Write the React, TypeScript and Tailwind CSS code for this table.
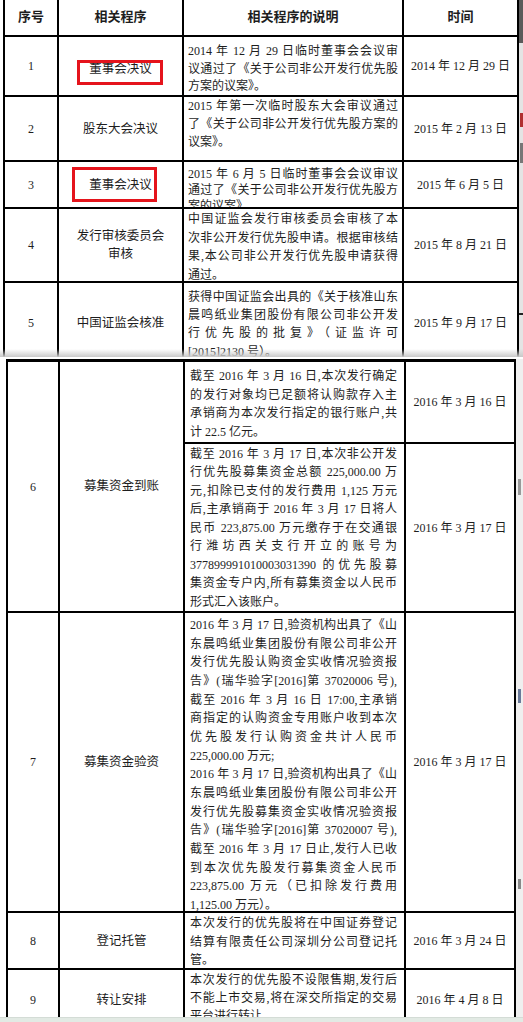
import React from 'react';

type Row = {
  no: string;
  prog: React.ReactNode;
  desc: string[][];
  date: string;
  h: string;
  pt: string;
  lh: string;
  box?: string;
  progPad?: string;
  clip?: boolean;
};

type Cols = { c1: string; c2: string; c3: string; c4: string; pad: string };

const FONT = { fontFamily: '"Liberation Serif", "Noto Sans CJK SC", serif' };

const topCols: Cols = { c1: 'w-[54px]', c2: 'w-[125px]', c3: 'w-[220px]', c4: 'w-[113px]', pad: 'pl-[4px] pr-[4px]' };
const bottomCols: Cols = { c1: 'w-[52px]', c2: 'w-[125px]', c3: 'w-[221px]', c4: 'w-[108px]', pad: 'pl-[5px] pr-[7px]' };

const topRows: Row[] = [
  {
    no: '1',
    prog: '董事会决议',
    progPad: 'pt-[6px]',
    box: 'left-[18px] top-[23px] w-[86px] h-[25px]',
    desc: [['2014 年 12 月 29 日临时董事会会议审', '议通过了《关于公司非公开发行优先股', '方案的议案》。']],
    date: '2014 年 12 月 29 日',
    h: 'h-[60px]',
    pt: 'pt-[6px]',
    lh: 'leading-[17.7px]',
  },
  {
    no: '2',
    prog: '股东大会决议',
    desc: [['2015 年第一次临时股东大会审议通过', '了《关于公司非公开发行优先股方案的', '议案》。']],
    date: '2015 年 2 月 13 日',
    h: 'h-[65px]',
    pt: 'pt-[0px]',
    lh: 'leading-[18px]',
  },
  {
    no: '3',
    prog: '董事会决议',
    box: 'left-[13px] top-[5px] w-[85px] h-[35px]',
    desc: [['2015 年 6 月 5 日临时董事会会议审议', '通过了《关于公司非公开发行优先股方', '案的议案》。']],
    date: '2015 年 6 月 5 日',
    h: 'h-[47px]',
    pt: 'pt-[4px]',
    lh: 'leading-[16px]',
    clip: true,
  },
  {
    no: '4',
    prog: (
      <>
        发行审核委员会
        <br />
        审核
      </>
    ),
    desc: [['中国证监会发行审核委员会审核了本', '次非公开发行优先股申请。根据审核结', '果,本公司非公开发行优先股申请获得', '通过。']],
    date: '2015 年 8 月 21 日',
    h: 'h-[74px]',
    pt: 'pt-[1px]',
    lh: 'leading-[18.7px]',
  },
  {
    no: '5',
    prog: '中国证监会核准',
    desc: [['获得中国证监会出具的《关于核准山东', '晨鸣纸业集团股份有限公司非公开发', '行优先股的批复》（证监许可', '[2015]2130 号）。']],
    date: '2015 年 9 月 17 日',
    h: 'h-[82px]',
    pt: 'pt-[5px]',
    lh: 'leading-[18.2px]',
  },
];

const bottomRows: Row[] = [
  {
    no: '7',
    prog: '募集资金验资',
    desc: [
      [
        '2016 年 3 月 17 日,验资机构出具了《山',
        '东晨鸣纸业集团股份有限公司非公开',
        '发行优先股认购资金实收情况验资报',
        '告》(瑞华验字[2016]第 37020006 号),',
        '截至 2016 年 3 月 16 日 17:00,主承销',
        '商指定的认购资金专用账户收到本次',
        '优先股发行认购资金共计人民币',
        '225,000.00 万元;',
      ],
      [
        '2016 年 3 月 17 日,验资机构出具了《山',
        '东晨鸣纸业集团股份有限公司非公开',
        '发行优先股募集资金实收情况验资报',
        '告》(瑞华验字[2016]第 37020007 号),',
        '截至 2016 年 3 月 17 日止,发行人已收',
        '到本次优先股发行募集资金人民币',
        '223,875.00 万元（已扣除发行费用',
        '1,125.00 万元）。',
      ],
    ],
    date: '2016 年 3 月 17 日',
    h: 'h-[300px]',
    pt: 'pt-[3px]',
    lh: 'leading-[18.67px]',
  },
  {
    no: '8',
    prog: '登记托管',
    desc: [['本次发行的优先股将在中国证券登记', '结算有限责任公司深圳分公司登记托', '管。']],
    date: '2016 年 3 月 24 日',
    h: 'h-[57px]',
    pt: 'pt-[1px]',
    lh: 'leading-[18.5px]',
  },
  {
    no: '9',
    prog: '转让安排',
    desc: [['本次发行的优先股不设限售期,发行后', '不能上市交易,将在深交所指定的交易', '平台进行转让。']],
    date: '2016 年 4 月 8 日',
    h: 'h-[62px]',
    pt: 'pt-[1px]',
    lh: 'leading-[18px]',
  },
];

function Desc({ desc, lh, pt, pad }: { desc: string[][]; lh: string; pt: string; pad: string }) {
  return (
    <div className={`${pt} ${pad} ${lh} text-[12px]`}>
      {desc.map((para, i) => (
        <div key={i}>
          {para.map((line, j) => (
            <div key={j} className={j < para.length - 1 ? 'text-justify [text-align-last:justify]' : 'text-left'}>
              {line}
            </div>
          ))}
        </div>
      ))}
    </div>
  );
}

function TableRow({ row, cols }: { row: Row; cols: Cols }) {
  return (
    <div className={`flex ${row.h} border-b-2 border-black`}>
      <div className={`${cols.c1} shrink-0 border-r-2 border-black flex items-center justify-center text-[12px]`}>{row.no}</div>
      <div
        className={`${cols.c2} ${row.progPad ?? ''} relative shrink-0 border-r-2 border-black flex items-center justify-center text-center text-[12.5px] leading-[18px]`}
      >
        <span>{row.prog}</span>
        {row.box && <div className={`absolute ${row.box} border-[3px] border-[#e5141c]`} />}
      </div>
      <div className={`${cols.c3} shrink-0 border-r-2 border-black ${row.clip ? 'overflow-hidden' : ''}`}>
        <Desc desc={row.desc} lh={row.lh} pt={row.pt} pad={cols.pad} />
      </div>
      <div className={`${cols.c4} shrink-0 flex items-center justify-center text-[12px]`}>{row.date}</div>
    </div>
  );
}

export default function App() {
  const row6a = [['截至 2016 年 3 月 16 日,本次发行确定', '的发行对象均已足额将认购款存入主', '承销商为本次发行指定的银行账户,共', '计 22.5 亿元。']];
  const row6b = [
    [
      '截至 2016 年 3 月 17 日,本次非公开发',
      '行优先股募集资金总额 225,000.00 万',
      '元,扣除已支付的发行费用 1,125 万元',
      '后,主承销商于 2016 年 3 月 17 日将人',
      '民币 223,875.00 万元缴存于在交通银',
      '行潍坊西关支行开立的账号为',
      '377899991010003031390 的优先股募',
      '集资金专户内,所有募集资金以人民币',
      '形式汇入该账户。',
    ],
  ];

  return (
    <div className="relative w-[523px] h-[1022px] overflow-hidden bg-white text-[#1e1e1e]" style={FONT}>
      {/* first page capture */}
      <div className="relative flex h-[357px] overflow-hidden">
        <div className="ml-[3px] w-[514px] shrink-0 border-l-2 border-black">
          <div className="flex h-[37px] border-b-2 border-black font-bold text-[13px]" style={{ fontFamily: '"Noto Sans CJK SC", sans-serif' }}>
            <div className={`${topCols.c1} shrink-0 border-r-2 border-black flex items-center justify-center pb-[4px]`}>序号</div>
            <div className={`${topCols.c2} shrink-0 border-r-2 border-black flex items-center justify-center pb-[4px]`}>相关程序</div>
            <div className={`${topCols.c3} shrink-0 border-r-2 border-black flex items-center justify-center pb-[4px]`}>相关程序的说明</div>
            <div className={`${topCols.c4} shrink-0 flex items-center justify-center pb-[4px]`}>时间</div>
          </div>
          {topRows.map((r) => (
            <TableRow key={r.no} row={r} cols={topCols} />
          ))}
        </div>
        <div className="flex-1 border-l-2 border-black flex flex-col">
          <div className="h-[43px] bg-[#5a5a5a]" />
          <div className="flex-1 bg-[#e4e4e4] relative">
            <div className="absolute left-[1px] top-[70px] w-[3px] h-[14px] bg-[#b03030]" />
            <div className="absolute left-[1px] top-[100px] w-[3px] h-[20px] bg-[#777]" />
            <div className="absolute left-[0px] top-[270px] w-[4px] h-[2px] bg-[#222]" />
          </div>
        </div>
        <div className="absolute bottom-0 left-0 right-0 h-[8px] bg-linear-to-b from-[#f4f4f4]/0 to-[#c9c9c9]" />
      </div>

      <div className="h-[2px]" />

      {/* second page capture */}
      <div className="flex">
        <div className="ml-[6px] w-[508px] shrink-0 border-l-2 border-t-[3px] border-black">
          <div className="flex h-[251px] border-b-2 border-black">
            <div className={`${bottomCols.c1} shrink-0 border-r-2 border-black flex items-center justify-center text-[12px]`}>6</div>
            <div className={`${bottomCols.c2} shrink-0 border-r-2 border-black flex items-center justify-center text-[12.5px]`}>募集资金到账</div>
            <div className="flex flex-col">
              <div className="flex h-[82px] border-b-2 border-black">
                <div className={`${bottomCols.c3} shrink-0 border-r-2 border-black`}>
                  <Desc desc={row6a} lh="leading-[18.7px]" pt="pt-[5px]" pad={bottomCols.pad} />
                </div>
                <div className={`${bottomCols.c4} shrink-0 flex items-center justify-center text-[12px]`}>2016 年 3 月 16 日</div>
              </div>
              <div className="flex flex-1">
                <div className={`${bottomCols.c3} shrink-0 border-r-2 border-black`}>
                  <Desc desc={row6b} lh="leading-[18.5px]" pt="pt-[1px]" pad={bottomCols.pad} />
                </div>
                <div className={`${bottomCols.c4} shrink-0 flex items-center justify-center text-[12px]`}>2016 年 3 月 17 日</div>
              </div>
            </div>
          </div>
          {bottomRows.map((r) => (
            <TableRow key={r.no} row={r} cols={bottomCols} />
          ))}
        </div>
        <div className="flex-1 border-l-2 border-black bg-[#efefef] relative">
          <div className="absolute left-[2px] top-[120px] w-[3px] h-[16px] bg-[#999]" />
          <div className="absolute left-[2px] top-[330px] w-[3px] h-[14px] bg-[#6a7a9a]" />
          <div className="absolute left-[2px] top-[520px] w-[3px] h-[10px] bg-[#888]" />
        </div>
      </div>

      <div className="absolute bottom-0 left-0 right-0 h-[5px] bg-[#e2eae4] border-t border-[#d4dcd6]" />
    </div>
  );
}
